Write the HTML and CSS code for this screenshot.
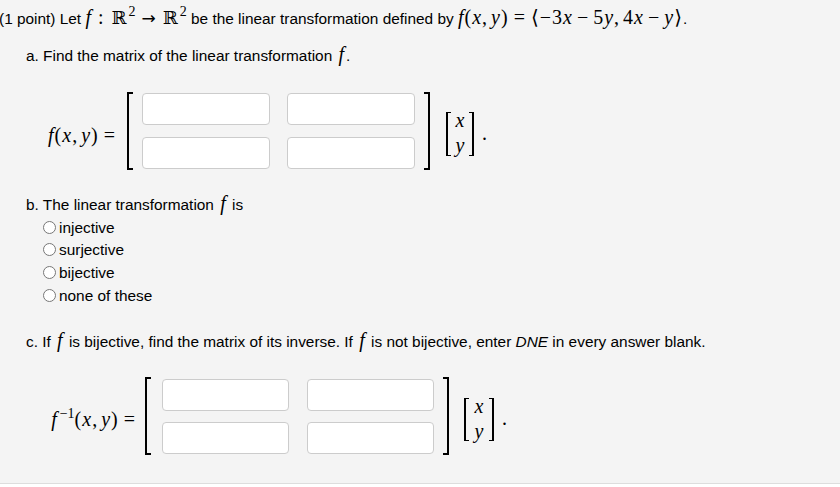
FILE: index.html
```html
<!DOCTYPE html>
<html>
<head>
<meta charset="utf-8">
<link rel="stylesheet" href="styles.css">
</head>
<body>
<div class="page">
  <p class="title">(1 point) Let <span class="math"><i>f</i><span class="rel colon">:</span><span class="bb">ℝ</span><sup>2</sup><span class="rel arrow">→</span><span class="bb">ℝ</span><sup>2</sup></span> be the linear transformation defined by <span class="math"><i>f</i>(<i>x</i>,<span class="thin"></span><i>y</i>)<span class="rel">=</span>⟨−3<i>x</i><span class="bin">−</span>5<i>y</i>,<span class="thin"></span>4<i>x</i><span class="bin">−</span><i>y</i>⟩</span>.</p>

  <p class="q qa">a. Find the matrix of the linear transformation <span class="math tf"><i>f</i></span>.</p>
  <div class="eq eq-a">
    <span class="math lhs"><i>f</i>(<i>x</i>,<span class="thin"></span><i>y</i>)<span class="rel rel-end">=</span></span>
    <div class="mat">
      <span class="brk brk-l"></span>
      <div class="cells">
        <input class="cell" type="text">
        <input class="cell" type="text">
        <input class="cell" type="text">
        <input class="cell" type="text">
      </div>
      <span class="brk brk-r"></span>
    </div>
    <div class="vec"><div class="vec-in"><i>x</i><i>y</i></div></div>
    <span class="dot">.</span>
  </div>

  <div class="partb">
    <p class="q">b. The linear transformation <span class="math tf"><i>f</i></span> is</p>
    <label class="opt"><input type="radio" name="t">injective</label>
    <label class="opt"><input type="radio" name="t">surjective</label>
    <label class="opt"><input type="radio" name="t">bijective</label>
    <label class="opt"><input type="radio" name="t">none of these</label>
  </div>

  <p class="q qc">c. If <span class="math tf"><i>f</i></span> is bijective, find the matrix of its inverse. If <span class="math tf"><i>f</i></span> is not bijective, enter <em>DNE</em> in every answer blank.</p>
  <div class="eq eq-c">
    <span class="math lhs"><i>f</i><sup>−1</sup>(<i>x</i>,<span class="thin"></span><i>y</i>)<span class="rel rel-end">=</span></span>
    <div class="mat">
      <span class="brk brk-l"></span>
      <div class="cells">
        <input class="cell" type="text">
        <input class="cell" type="text">
        <input class="cell" type="text">
        <input class="cell" type="text">
      </div>
      <span class="brk brk-r"></span>
    </div>
    <div class="vec"><div class="vec-in"><i>x</i><i>y</i></div></div>
    <span class="dot">.</span>
  </div>
</div>
</body>
</html>
```

FILE: styles.css
```css
* { box-sizing: border-box; }
html, body { margin: 0; padding: 0; background: #ffffff; }
body {
  font-family: "Liberation Sans", Arial, sans-serif;
  font-size: 15.4px;
  color: #000;
}
.page {
  background: #f4f4f4;
  height: 484px;
  border-bottom: 1px solid #dddddd;
  padding-top: 10px;
  overflow: hidden;
}
.title {
  margin: 0 0 0 -1px;
  line-height: 18px;
  white-space: nowrap;
}
.math {
  font-family: "Liberation Serif", "DejaVu Serif", serif;
  font-size: 20px;
  letter-spacing: 1px;
  line-height: 0;
  white-space: nowrap;
}
.math i { font-style: italic; }
.tf i { margin: 0 1px 0 2px; }
.math sup {
  font-size: 14px;
  line-height: 0;
  vertical-align: 0.55em;
  margin-left: 2px;
  letter-spacing: 0;
}
.bb { font-family: "DejaVu Serif", serif; font-size: 18px; letter-spacing: 0; }
.rel { margin: 0 5px; }
.colon { margin: 0 7px 0 6px; }
.bin { margin: 0 4px; }
.thin { margin-right: 3px; }
.arrow { font-family: "DejaVu Sans", sans-serif; font-size: 17px; margin: 0 6px; }
.q {
  margin: 0;
  line-height: 18px;
  padding-left: 26px;
}
.qa { margin-top: 19px; }
.eq {
  display: flex;
  align-items: center;
  padding-left: 43px;
}
.eq-a { margin-top: 27px; }
.eq-c { margin-top: 26.6px; }
.lhs {
  display: block;
  line-height: 20px;
  text-align: right;
  margin-top: 8px;
  width: 84px;
  padding-right: 11px;
}
.rel-end { margin-right: 0; }
.eq-c .lhs {
  width: 102px;
  padding-right: 9px;
  margin-top: 5px;
}
.mat {
  display: flex;
  align-items: stretch;
  height: 78px;
}
.brk {
  width: 6px;
  border: 2px solid #000;
}
.brk-l { border-right: none; }
.brk-r { border-left: none; }
.cells {
  display: grid;
  grid-template-columns: 128px 128px;
  column-gap: 17px;
  row-gap: 10px;
  padding: 1px 9px 0 9px;
}
.eq-c .cells {
  grid-template-columns: 127px 127px;
  column-gap: 18px;
  padding: 2px 9px 0 11px;
}
.cell {
  width: 100%;
  height: 32px;
  margin: 0;
  border: 1px solid #cccccc;
  border-radius: 4px;
  background: #ffffff;
  padding: 0 6px;
  font: inherit;
}
.vec {
  display: flex;
  align-items: center;
  height: 44px;
  width: 28px;
  margin-left: 16px;
  margin-top: 6px;
  border: 2px solid #000;
  border-top: none;
  border-bottom: none;
  position: relative;
  font-family: "Liberation Serif", "DejaVu Serif", serif;
  font-size: 20px;
}
.eq-c .vec { margin-left: 15px; width: 30px; height: 43px; margin-top: 7px; }
.vec::before, .vec::after {
  content: "";
  position: absolute;
  top: 0;
  bottom: 0;
  width: 3px;
  border-top: 1px solid #000;
  border-bottom: 1px solid #000;
}
.vec::before { left: 0; }
.vec::after { right: 0; }
.vec-in {
  display: flex;
  flex-direction: column;
  align-items: center;
  width: 100%;
  line-height: 25px;
  height: 50px;
  margin-top: -2px;
}
.vec-in i { display: block; font-style: italic; }
.dot {
  font-family: "Liberation Serif", serif;
  font-size: 20px;
  margin-left: 8px;
  margin-top: 4px;
}
.partb {
  margin-top: 24px;
}
.partb .q,
.opt {
  line-height: 22.7px;
}
.opt {
  display: block;
  padding-left: 38px;
}
.opt input {
  margin: 3px 3px 0 5px;
  vertical-align: -1px;
}
.qc { margin-top: 25px; }
.qc em { font-style: italic; }
```
